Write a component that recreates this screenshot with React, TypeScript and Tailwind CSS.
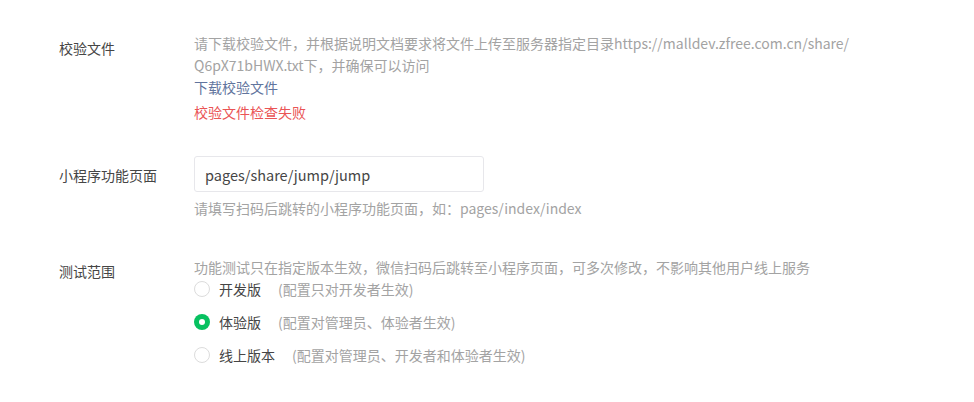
import { useState } from "react";

const font = {
  fontFamily: '"Microsoft YaHei", "Noto Sans CJK SC", "Noto Sans", sans-serif',
};

const scopes = [
  { value: "develop", label: "开发版", note: "(配置只对开发者生效)" },
  { value: "trial", label: "体验版", note: "(配置对管理员、体验者生效)" },
  { value: "release", label: "线上版本", note: "(配置对管理员、开发者和体验者生效)" },
];

export default function App() {
  const [path, setPath] = useState("pages/share/jump/jump");
  const [scope, setScope] = useState("trial");

  return (
    <div className="w-[974px] h-[402px] bg-white pl-[59px] pt-8" style={font}>
      {/* 校验文件 */}
      <div className="flex">
        <div className="w-[135px] shrink-0 pt-[5px] text-[14px] leading-[22px] text-[#454545]">
          校验文件
        </div>
        <div className="w-[680px] text-[14px] leading-[22px]">
          <p className="text-[#a3a3a3]">
            请下载校验文件，并根据说明文档要求将文件上传至服务器指定目录https://malldev.zfree.com.cn/share/
            <br />
            Q6pX71bHWX.txt下，并确保可以访问
          </p>
          <a href="#" className="block text-[#61749d]">
            下载校验文件
          </a>
          <p className="mt-[3px] text-[#ea5455]">校验文件检查失败</p>
        </div>
      </div>

      {/* 小程序功能页面 */}
      <div className="flex mt-[33px]">
        <div className="w-[135px] shrink-0 pt-2 text-[14px] leading-[22px] text-[#454545]">
          小程序功能页面
        </div>
        <div>
          <input
            value={path}
            onChange={(e) => setPath(e.target.value)}
            className="w-[290px] h-[36px] px-[10px] rounded-[3px] border border-[#e7e7eb] text-[14.5px] text-[#454545] outline-none focus:border-[#07c160]"
            style={font}
          />
          <p className="mt-[5px] text-[14px] leading-[22px] text-[#a3a3a3]">
            请填写扫码后跳转的小程序功能页面，如：pages/index/index
          </p>
        </div>
      </div>

      {/* 测试范围 */}
      <div className="flex mt-[37px]">
        <div className="w-[135px] shrink-0 pt-1 text-[14px] leading-[22px] text-[#454545]">
          测试范围
        </div>
        <div>
          <p className="text-[14px] leading-[22px] text-[#a3a3a3]">
            功能测试只在指定版本生效，微信扫码后跳转至小程序页面，可多次修改，不影响其他用户线上服务
          </p>
          <div className="flex flex-col gap-[11px]">
            {scopes.map((s) => {
              const checked = scope === s.value;
              return (
                <label
                  key={s.value}
                  className="flex items-center h-[22px] cursor-pointer text-[14px]"
                  onClick={() => setScope(s.value)}
                >
                  <span
                    className={
                      checked
                        ? "w-4 h-4 rounded-full bg-[#07c160] flex items-center justify-center"
                        : "w-4 h-4 rounded-full border border-[#dcdcdc] bg-white"
                    }
                  >
                    {checked && <span className="w-[6px] h-[6px] rounded-full bg-white" />}
                  </span>
                  <span className="ml-[9px] text-[#454545]">{s.label}</span>
                  <span className="ml-[17px] text-[#a3a3a3]">{s.note}</span>
                </label>
              );
            })}
          </div>
        </div>
      </div>
    </div>
  );
}
